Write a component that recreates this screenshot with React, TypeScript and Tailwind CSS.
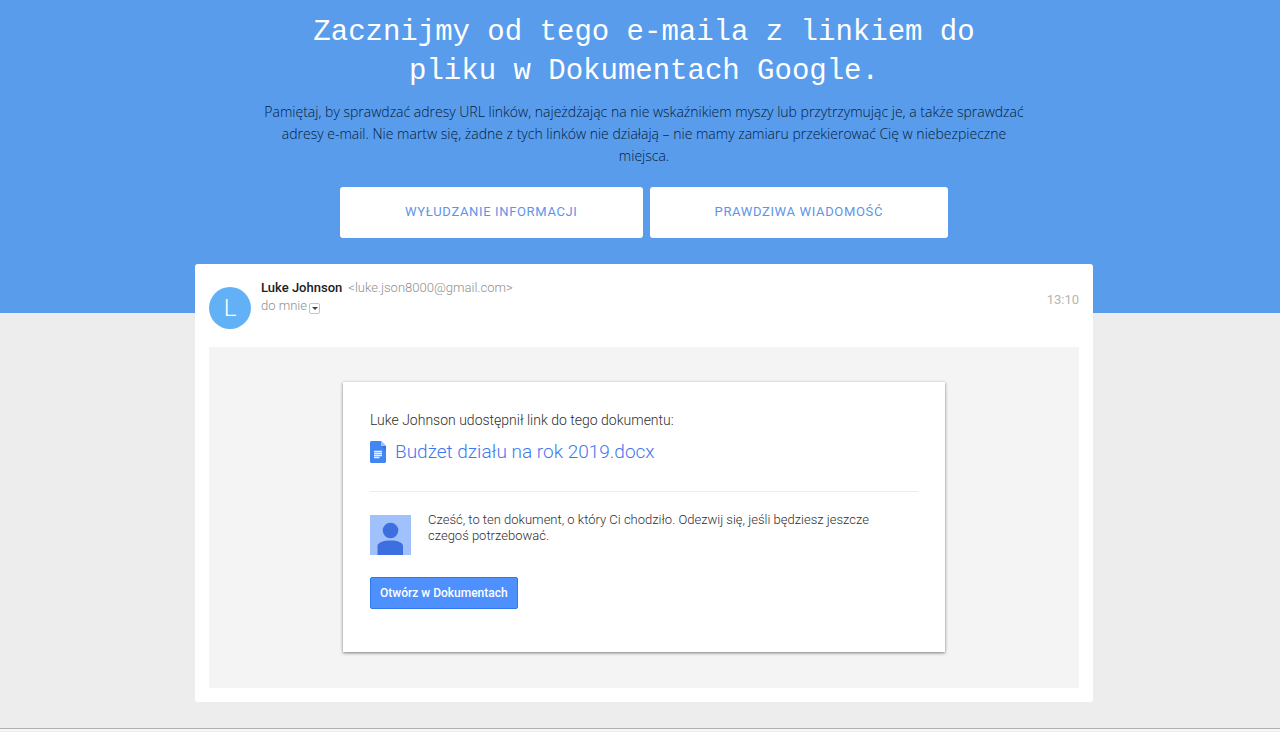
type Email = {
  sender: string
  address: string
  time: string
  fileName: string
  message: string
}

const email: Email = {
  sender: 'Luke Johnson',
  address: 'luke.json8000@gmail.com',
  time: '13:10',
  fileName: 'Budżet działu na rok 2019.docx',
  message:
    'Cześć, to ten dokument, o który Ci chodziło. Odezwij się, jeśli będziesz jeszcze czegoś potrzebować.',
}

const answers = ['Wyłudzanie informacji', 'Prawdziwa wiadomość']

function DocIcon() {
  return (
    <svg viewBox="0 0 16 22" className="h-[22px] w-4 shrink-0" aria-hidden="true">
      <path d="M1.5 0H11l5 5v15.5a1.5 1.5 0 0 1-1.5 1.5h-13A1.5 1.5 0 0 1 0 20.5v-19A1.5 1.5 0 0 1 1.5 0z" fill="#4285f4" />
      <path d="M11 0l5 5h-5z" fill="#a1c2fa" />
      <path d="M11 5h5v5z" fill="#3a75dc" />
      <path d="M4 10.5h8M4 12.5h8M4 14.5h8M4 16.5h5.5" stroke="#e8f0fe" strokeWidth="1.3" />
    </svg>
  )
}

function PersonIcon() {
  return (
    <svg viewBox="0 0 41 40" className="h-10 w-[41px] shrink-0" aria-hidden="true">
      <path d="M0 0h41v40H0z" fill="#a0c1fb" />
      <circle cx="20.5" cy="15.5" r="7.8" fill="#3d6fe0" />
      <path d="M7.5 40V31c0-3.500 6-5.500 13-5.500s12.500 2 12.500 5.500v9z" fill="#3d6fe0" />
    </svg>
  )
}

function QuestionHeader() {
  return (
    <header className="bg-[#599cec] pt-[13px] pr-4 pb-[75px] pl-6 text-center">
      <h1 className="mx-auto max-w-[760px] font-['Liberation_Mono',monospace] text-[29px] leading-[39px] text-white">
        Zacznijmy od tego e-maila z linkiem do pliku w Dokumentach Google.
      </h1>
      <p className="mx-auto mt-[10px] max-w-[770px] font-['Open_Sans',sans-serif] text-[14px] leading-[22px] font-light text-[#031c3c]">
        Pamiętaj, by sprawdzać adresy URL linków, najeżdżając na nie wskaźnikiem
        myszy lub przytrzymując je, a także sprawdzać adresy e-mail. Nie martw
        się, żadne z tych linków nie działają – nie mamy zamiaru przekierować
        Cię w niebezpieczne miejsca.
      </p>
      <div className="mt-5 flex flex-wrap justify-center gap-[7px]">
        {answers.map((answer) => (
          <button
            key={answer}
            type="button"
            className="h-[51px] rounded-[3px] bg-white px-[65px] pb-[2px] text-[13px] tracking-wider text-[#5e94e6] uppercase"
          >
            {answer}
          </button>
        ))}
      </div>
    </header>
  )
}

function EmailHeader() {
  return (
    <div className="flex items-start gap-[10px]">
      <div className="mt-[9px] flex size-[42px] shrink-0 items-center justify-center rounded-full bg-[#62b1f6] text-[24px] font-light text-white">
        L
      </div>
      <div className="mt-[1px] grow text-[13px] leading-[18px] font-light text-[#8f8f8f]">
        <div className="flex flex-wrap gap-x-[6px]">
          <span className="font-medium text-[#202124]">{email.sender}</span>
          <span>&lt;{email.address}&gt;</span>
        </div>
        <div className="flex items-center gap-[2px]">
          do mnie
          <button
            type="button"
            aria-label="Pokaż szczegóły"
            className="mt-1 flex h-[11px] w-[11px] items-center justify-center rounded-[2px] border border-[#c4c4c4]"
          >
            <svg viewBox="0 0 6 3" className="h-[3px] w-[6px]" aria-hidden="true">
              <path d="M0 0h6L3 3z" fill="#444" />
            </svg>
          </button>
        </div>
      </div>
      <time className="mt-3 text-[13px] leading-5 text-[#b5b5b5]">
        {email.time}
      </time>
    </div>
  )
}

function SharedDocument() {
  return (
    <div className="mx-auto max-w-[602px] bg-white px-[27px] pt-7 pb-[43px] text-[#2f2f2f] shadow-[0_1px_3px_rgba(0,0,0,0.5)]">
      <p className="text-[14px] leading-5 font-light">
        {email.sender} udostępnił link do tego dokumentu:
      </p>
      <a
        href="#"
        className="mt-2 flex items-center gap-[9px] text-[19px] leading-[28px] font-light text-[#3f77ee]"
      >
        <DocIcon />
        {email.fileName}
      </a>
      <hr className="mt-[25px] border-[#ececec]" />
      <div className="mt-[23px] flex items-start gap-[17px]">
        <PersonIcon />
        <p className="-mt-[3px] max-w-[470px] text-[13px] leading-4 font-light">
          {email.message}
        </p>
      </div>
      <button
        type="button"
        className="mt-[22px] h-8 rounded-[2px] border border-[#3079ed] bg-[#4d90fe] px-[9px] text-[12px] font-medium text-white"
      >
        Otwórz w Dokumentach
      </button>
    </div>
  )
}

export default function App() {
  return (
    <div className="min-h-screen bg-[#ededed] font-[Roboto,sans-serif]">
      <QuestionHeader />
      <main className="-mt-[49px] pr-4 pb-[26px] pl-6">
        <article className="mx-auto max-w-[898px] rounded-[3px] bg-white p-[14px]">
          <EmailHeader />
          <div className="mt-[18px] bg-[#f4f4f4] px-4 pt-[35px] pb-9">
            <SharedDocument />
          </div>
        </article>
      </main>
      <footer className="h-[3px] border-t border-[#b0b0b0] bg-[#f7f7f7]" />
    </div>
  )
}
